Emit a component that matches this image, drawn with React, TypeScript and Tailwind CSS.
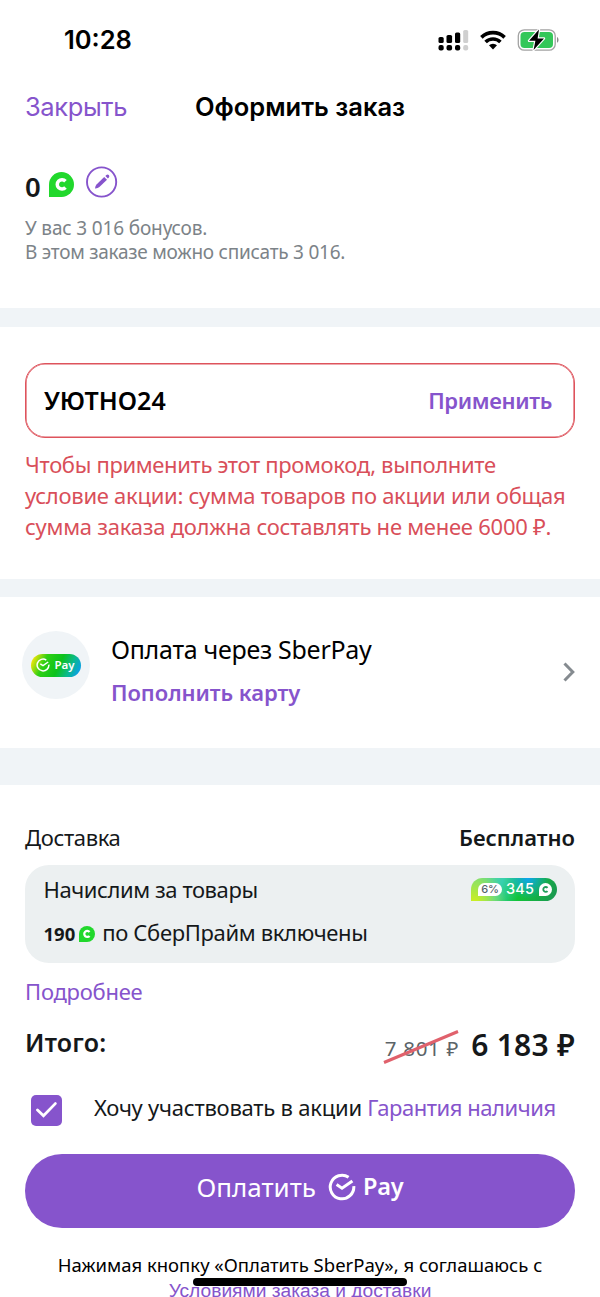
import type { ReactNode } from "react";
import clsx from "clsx";

function BonusIcon({ className, light }: { className?: string; light?: boolean }) {
  return (
    <svg viewBox="0 0 24 24" fill="none" className={clsx("shrink-0", className)}>
      <path d="M0 24V12a12 12 0 1 1 12 12Z" fill={light ? "#fff" : "#21d82c"} />
      <path
        d="M15.8 8.9a4.5 4.5 0 1 0 0 6"
        stroke={light ? "#1f9d5a" : "#fff"}
        strokeWidth="3.4"
      />
    </svg>
  );
}

function SberCheck({ className }: { className?: string }) {
  return (
    <svg
      viewBox="0 0 28 28"
      fill="none"
      stroke="currentColor"
      strokeWidth="3"
      className={clsx("shrink-0", className)}
    >
      <path d="M20.6 4.2A11.8 11.8 0 1 0 25.8 13.2" />
      <path d="M8.6 11.6l5.4 3.6L24.4 8" />
    </svg>
  );
}

function StatusBar() {
  return (
    <div className="flex h-20 items-center justify-between pl-16 pr-10">
      <span className="font-['Inter'] text-[25.5px] font-semibold leading-8 text-black">
        10:28
      </span>
      <div className="flex items-center">
        <svg width="31" height="24" viewBox="0 0 31 24">
          <g fill="#000">
            <rect x="0.5" y="9" width="5.2" height="6" rx="1.6" />
            <rect x="8.5" y="7" width="5.6" height="8" rx="1.6" />
            <rect x="17" y="4.5" width="5.2" height="10.5" rx="1.6" />
            <rect x="0.5" y="17" width="5.2" height="5.4" rx="2" />
            <rect x="8.5" y="17" width="5.6" height="5.4" rx="2" />
            <rect x="17" y="17" width="5.2" height="5.4" rx="2" />
          </g>
          <rect x="25.2" y="2" width="5" height="13" rx="1.6" fill="#cfcfcf" />
          <rect x="25.2" y="17" width="5" height="5.4" rx="2" fill="#cfcfcf" />
        </svg>
        <svg width="26" height="20" viewBox="0 0 26 20" className="ml-[11px]">
          <g fill="none" stroke="#000" strokeWidth="3.6">
            <path d="M1.4 7.4a16.6 16.6 0 0 1 23.2 0" />
            <path d="M5.6 12a10.6 10.6 0 0 1 14.8 0" />
          </g>
          <path d="M13 19.4l-4-4.1a5.8 5.8 0 0 1 8 0Z" />
        </svg>
        <svg width="43" height="24" viewBox="0 0 43 24" className="ml-[11px]">
          <rect x="1.3" y="1.8" width="36.9" height="20.4" rx="6" fill="none" stroke="#a3a3a3" strokeWidth="1.3" />
          <rect x="3.5" y="4" width="32.5" height="16" rx="4" fill="#34c759" />
          <path d="M40 9c2 .8 2 5 0 5.8Z" fill="#8a8a8a" />
          <path
            d="M22 1.5 12 12.8h6.4L16.6 22 27 10.4h-6.4Z"
            fill="#000"
            stroke="#fff"
            strokeWidth="2.4"
            paintOrder="stroke"
            strokeLinejoin="round"
          />
        </svg>
      </div>
    </div>
  );
}

function Line({ children, className }: { children: ReactNode; className?: string }) {
  return <p className={clsx("whitespace-nowrap", className)}>{children}</p>;
}

export default function App() {
  return (
    <div className="h-[1297px] w-[600px] overflow-hidden bg-white font-['Noto_Sans',sans-serif] text-[#15181a]">
      <StatusBar />

      <header className="relative flex h-[54px] items-center justify-center font-['Inter']">
        <button className="absolute left-[25px] text-[25.5px] tracking-[-0.4px] text-[#8654cc]">Закрыть</button>
        <h1 className="text-[25.5px] font-semibold text-black">Оформить заказ</h1>
      </header>

      <section className="h-[174px] px-[25px] pt-[31px]">
        <div className="flex h-10 items-center">
          <span className="mt-1 w-4 text-[27.5px] font-semibold leading-10">0</span>
          <BonusIcon className="ml-2 -mt-0.5 size-[25px]" />
          <svg width="32" height="32" viewBox="0 0 32 32" className="ml-3 -mt-1.5">
            <circle cx="15.6" cy="16" r="14.6" fill="none" stroke="#8654cc" strokeWidth="1.9" />
            <path d="M9 22.4q.2-2.6 1.8-4.2l7.4-7.2 2.8 2.8-7.6 7.2q-1.8 1.6-4.4 1.4Z" fill="#8654cc" />
            <path d="M19.4 10l1-1q1.3-1 2.4.1 1.1 1.2.1 2.4l-1 1Z" fill="#8654cc" />
          </svg>
        </div>
        <div className="mt-[11px] text-[19px] leading-6 tracking-[-0.25px] text-[#7c8388]">
          <Line className="tracking-[-0.15px]">У вас 3 016 бонусов.</Line>
          <Line>В этом заказе можно списать 3 016.</Line>
        </div>
      </section>

      <div className="h-[19px] bg-[#f0f4f7]" />

      <section className="h-[252px] px-[25px] pt-9">
        <div className="flex h-[75px] items-center justify-between rounded-[20px] border border-[#de535c] pl-[18px] pr-[22px] shadow-[inset_0_0_0_0.6px_#de535c]">
          <span className="text-[25px] font-semibold text-black">УЮТНО24</span>
          <button className="text-[22px] font-semibold tracking-[-0.35px] text-[#8654cc]">Применить</button>
        </div>
        <div className="mt-[11px] text-[22px] leading-[31px] text-[#d94f5a]">
          <Line className="tracking-[-0.34px]">Чтобы применить этот промокод, выполните</Line>
          <Line className="tracking-[-0.27px]">условие акции: сумма товаров по акции или общая</Line>
          <Line className="tracking-[-0.25px]">сумма заказа должна составлять не менее 6000 ₽.</Line>
        </div>
      </section>

      <div className="h-[18px] bg-[#f0f4f7]" />

      <section className="flex h-[151px] items-start pl-[21.5px] pr-[25px] pt-[34px]">
        <div className="flex size-[68px] items-center justify-center rounded-full bg-[#f0f4f7]">
          <div className="flex h-[23px] w-[50px] items-center justify-center gap-1 rounded-full bg-[linear-gradient(115deg,#f5e60a_6%,#2fd013_28%,#0cc21c_55%,#0bb98a_75%,#0a9df0_95%)] text-white">
            <SberCheck className="size-[14px]" />
            <span className="text-[11.5px] font-semibold leading-none">Pay</span>
          </div>
        </div>
        <div className="ml-[21.5px] flex-1">
          <Line className="text-[25px] leading-9 tracking-[-0.28px] text-black">Оплата через SberPay</Line>
          <Line className="mt-[9px] text-[22px] font-semibold leading-8 tracking-[-0.05px] text-[#8654cc]">
            Пополнить карту
          </Line>
        </div>
        <svg width="12" height="20" viewBox="0 0 12 20" className="mt-[31px]">
          <path d="M1.5 1.5l8.3 8.5-8.3 8.5" fill="none" stroke="#858b90" strokeWidth="3" />
        </svg>
      </section>

      <div className="h-[37px] bg-[#f0f4f7]" />

      <section className="px-[25px] pt-9">
        <div className="flex h-8 items-center justify-between text-[22px]">
          <span className="tracking-[-0.35px]">Доставка</span>
          <span className="font-semibold">Бесплатно</span>
        </div>

        <div className="mt-3 h-[98px] rounded-[24px] bg-[#ecf0f1] pl-[18.5px] pr-[18px] pt-2 text-[22px]">
          <div className="flex h-8 items-center justify-between">
            <span className="tracking-[-0.42px]">Начислим за товары</span>
            <div className="flex h-[23px] w-[86px] items-center rounded-full rounded-bl-none bg-[radial-gradient(circle_at_4%_110%,#d3f01a_0%,transparent_38%),radial-gradient(circle_at_66%_0%,#0ca4f2_0%,transparent_34%),linear-gradient(115deg,#6fdc84_10%,#38d0b0_34%,#12c43a_58%,#1a9a50_95%)] pl-[7px] text-white">
              <span className="flex h-[13px] w-[24px] items-center justify-center rounded-full rounded-bl-none bg-white font-['Inter'] text-[11px] font-medium leading-none tracking-[-0.3px] text-[#55636b]">
                6%
              </span>
              <span className="ml-1 font-['Inter'] text-[14.5px] font-medium tracking-[0.2px]">345</span>
              <BonusIcon light className="ml-[5px] size-[13px]" />
            </div>
          </div>
          <div className="mt-[11px] flex h-8 items-center">
            <span className="mt-1 text-[18.5px] font-bold">190</span>
            <BonusIcon className="ml-1 mt-1 size-4" />
            <span className="ml-[7px] whitespace-nowrap tracking-[-0.34px]">по СберПрайм включены</span>
          </div>
        </div>

        <Line className="mt-3 text-[22px] leading-8 tracking-[-0.25px] text-[#8654cc]">Подробнее</Line>

        <div className="mt-4 flex h-10 items-center justify-between">
          <span className="text-[25px] font-semibold tracking-[0.2px]">Итого:</span>
          <div className="flex items-center pt-0.5">
            <div className="relative">
              <span className="relative top-1 text-[20.5px] tracking-[0.7px] text-[#5c6468]">7 801 ₽</span>
              <svg width="76" height="36" viewBox="0 0 76 36" className="absolute -left-0.5 top-0">
                <path d="M1 33.5 75 2.5" stroke="#e0616c" strokeWidth="3" />
              </svg>
            </div>
            <span className="ml-3 whitespace-nowrap text-[30px] font-semibold tracking-[0.25px]">6 183 ₽</span>
          </div>
        </div>

        <div className="mt-[29px] flex h-9 items-center">
          <div className="ml-[5.5px] flex size-[31px] items-center justify-center rounded-[5px] bg-[#8654cc]">
            <svg width="21" height="16" viewBox="0 0 21 16">
              <path d="M1.5 8l6 5.8L19.3 1.6" fill="none" stroke="#fff" strokeWidth="2.8" strokeLinecap="round" />
            </svg>
          </div>
          <Line className="-mt-1.5 ml-[32.5px] text-[22px] tracking-[-0.23px]">
            Хочу участвовать в акции <a className="tracking-[-0.45px] text-[#8654cc]">Гарантия наличия</a>
          </Line>
        </div>

        <button className="mt-[26px] flex h-[74px] w-full items-center justify-center rounded-full bg-[#8654cc] pb-2 text-white">
          <span className="text-[26px]">Оплатить</span>
          <SberCheck className="ml-3 size-7" />
          <span className="ml-[7px] text-[23.5px] font-semibold tracking-[-0.2px]">Pay</span>
        </button>

        <div className="relative mt-6 text-center">
          <Line className="text-[18.5px] leading-[26px] text-black">
            Нажимая кнопку «Оплатить SberPay», я соглашаюсь с
          </Line>
          <Line className="font-['Liberation_Sans'] text-[19.2px] leading-[26px] text-[#8654cc]">
            Условиями заказа и доставки
          </Line>
          <div className="absolute left-[168px] top-[26px] h-2 w-[214px] rounded-full bg-black" />
        </div>
      </section>
    </div>
  );
}
